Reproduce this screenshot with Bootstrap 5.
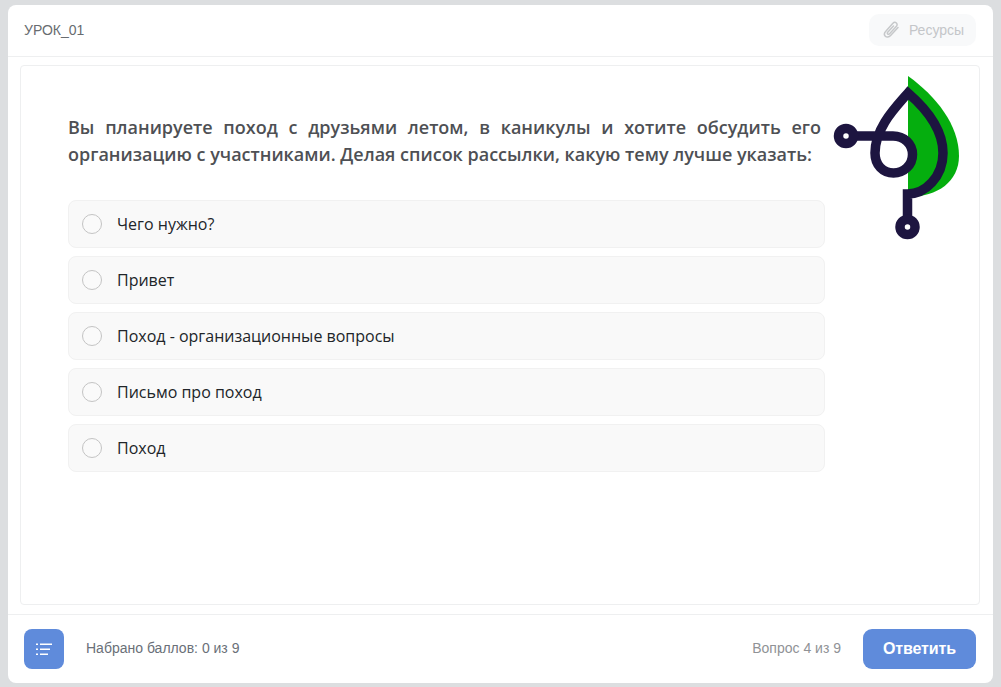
<!DOCTYPE html>
<html lang="ru"><head><meta charset="utf-8"><title>Урок</title>
<link href="https://cdn.jsdelivr.net/npm/bootstrap@5.3.0/dist/css/bootstrap.min.css" rel="stylesheet">
<style>
html,body{height:100%}
body{background:#dcdee0;font-family:"Liberation Sans",sans-serif;padding:5px 8px 4px;overflow:hidden}
.shell{height:678px;background:#fff;border-radius:8px}
.top-bar{height:52px;padding:0 17px 0 16px;border-bottom:1px solid #eeeff0}
.lesson{font-size:14px;color:#686c70}
.res-btn{width:107px;height:32px;background:#f8f9fa;border-radius:10px;color:#c4c6c9;font-size:14px;gap:9px;padding-left:2px}
.stage{flex:1 1 0;padding:8px 13px 9px 12px}
.q-card{height:540px;border:1px solid #eeeff0;border-radius:4px;padding:48px 154px 0 47px;position:relative}
.q-text{font-family:"Open Sans",sans-serif;font-weight:600;font-size:18px;line-height:27px;color:#4e5054;text-align:justify;margin:0 0 32px 0;width:753px}
.opt{height:48px;background:#f9f9f9;border:1px solid #f1f1f1;border-radius:8px;margin-bottom:8px;padding-left:13px;font-family:"Open Sans",sans-serif;font-size:16px;color:#212529;gap:15px;width:757px}
.dot{width:20px;height:20px;border:1px solid #c4c4c4;border-radius:50%;background:#fafafa}
.leaf{position:absolute;left:810px;top:5px}
.bottom-bar{height:70px;border-top:1px solid #eeeff0;padding:0 17px 0 16px}
.list-btn{width:40px;height:40px;background:#5f8bdb;border-radius:8px;border:0;padding:0}
.score{font-size:14px;color:#6a7078;margin-left:22px}
.count{font-size:14px;color:#909296;margin-right:22px}
.send-btn{width:113px;height:40px;background:#5f8bdb;border-radius:9px;border:0;color:#fff;font-size:16px;font-weight:700;padding:0;letter-spacing:-.1px}
</style></head><body>
<div class="shell d-flex flex-column">
  <div class="top-bar d-flex align-items-center justify-content-between">
    <span class="lesson">УРОК_01</span>
    <div class="res-btn d-flex align-items-center justify-content-center">
      <svg width="17" height="18" viewBox="0 0 17 18" fill="none" stroke="#c6c8ca" stroke-width="1.500" stroke-linecap="round"><path d="M15 6.500 7.600 14.600c-1.700 1.800-4 1.900-5.300.6-1.300-1.300-1-3.400.5-5L9.700 2.500c1.100-1.200 2.700-1.400 3.700-.5 1 .9.9 2.400-.2 3.600L6.600 12.700c-.6.7-1.400.8-1.900.3-.5-.5-.4-1.200.2-1.900L10.500 5"/></svg>
      <span>Ресурсы</span>
    </div>
  </div>
  <div class="stage">
    <div class="q-card">
      <p class="q-text">Вы планируете поход с друзьями летом, в каникулы и хотите обсудить его организацию с участниками. Делая список рассылки, какую тему лучше указать:</p>
      <div class="opt d-flex align-items-center"><span class="dot"></span><span>Чего нужно?</span></div>
      <div class="opt d-flex align-items-center"><span class="dot"></span><span>Привет</span></div>
      <div class="opt d-flex align-items-center"><span class="dot"></span><span>Поход - организационные вопросы</span></div>
      <div class="opt d-flex align-items-center"><span class="dot"></span><span>Письмо про поход</span></div>
      <div class="opt d-flex align-items-center"><span class="dot"></span><span>Поход</span></div>
      <svg class="leaf" width="135" height="175" viewBox="831 71 135 175" fill="none">
        <path d="M908 76C936 96 959 125 959 156 959 181 938 197 908 197Z" fill="#05ae0e"/>
        <path d="M908 104V190C925 188 940 170 940 152 940 135 925 118 908 104Z" fill="#05ae0e"/>
        <g stroke="#1d1540" stroke-width="9.500">
          <path d="M854 136H893C904 136 912.500 144 912.500 154.500 912.500 165 904 173 893.500 173 883 173 875 165 875 153 875 128 895 108 908 93 930 112 943 132 943 153 943 177 925 194 907.500 194V219" stroke-linejoin="miter"/>
          <circle cx="846" cy="136" r="7.500"/>
          <circle cx="907.500" cy="227" r="7.500"/>
        </g>
      </svg>
    </div>
  </div>
  <div class="bottom-bar d-flex align-items-center">
    <button class="list-btn d-flex align-items-center justify-content-center" aria-label="Список">
      <svg width="16" height="14" viewBox="0 0 16 14" fill="#fff"><rect x="0" y="1.500" width="2" height="1.500"/><rect x="4" y="1.500" width="12" height="1.500"/><rect x="0" y="6.500" width="2" height="1.500"/><rect x="4" y="6.500" width="10" height="1.500"/><rect x="0" y="11.500" width="2" height="1.500"/><rect x="4" y="11.500" width="8" height="1.500"/></svg>
    </button>
    <span class="score">Набрано баллов: 0 из 9</span>
    <span class="count ms-auto">Вопрос 4 из 9</span>
    <button class="send-btn">Ответить</button>
  </div>
</div>
<script src="https://cdn.jsdelivr.net/npm/bootstrap@5.3.0/dist/js/bootstrap.bundle.min.js"></script>
</body></html>
